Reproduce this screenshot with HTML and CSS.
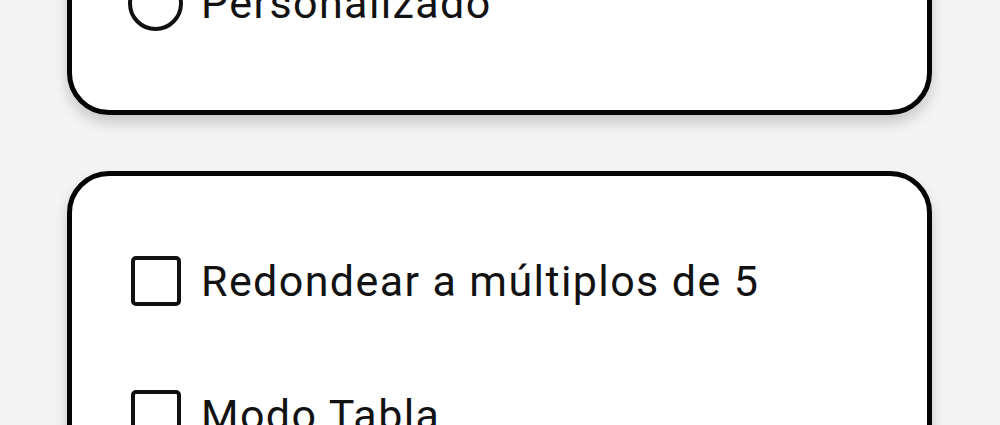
FILE: index.html
```html
<!DOCTYPE html>
<html lang="es">
<head>
<meta charset="utf-8">
<link rel="stylesheet" href="styles.css">
</head>
<body>
<div class="page">
  <div class="card card-top">
    <label class="row">
      <span class="radio"></span>
      <span class="label">Personalizado</span>
    </label>
  </div>
  <div class="card">
    <label class="row">
      <span class="checkbox"></span>
      <span class="label">Redondear a múltiplos de 5</span>
    </label>
    <label class="row">
      <span class="checkbox"></span>
      <span class="label">Modo Tabla</span>
    </label>
  </div>
</div>
</body>
</html>
```
FILE: styles.css
```css
html, body {
  margin: 0;
  padding: 0;
  background: #f4f4f4;
  overflow: hidden;
}
.page {
  width: 1000px;
  height: 425px;
  padding: 0 68px 0 67px;
  box-sizing: border-box;
  display: flex;
  flex-direction: column;
  gap: 56px;
  font-family: Roboto, "Noto Sans", sans-serif;
  color: #121212;
}
.card {
  background: #fff;
  border: 5px solid #050505;
  border-radius: 42px;
  padding: 38px 0 38px 59px;
  box-shadow: 0 8px 14px rgba(0, 0, 0, 0.18);
  flex-shrink: 0;
}
.card-top {
  margin-top: -107px;
  padding-bottom: 40px;
}
.row {
  display: flex;
  align-items: center;
  height: 134px;
}
.checkbox {
  width: 50px;
  height: 50px;
  box-sizing: border-box;
  border: 4.5px solid #111;
  border-radius: 5px;
  flex-shrink: 0;
}
.radio {
  width: 55px;
  height: 55px;
  box-sizing: border-box;
  border: 4.5px solid #111;
  border-radius: 50%;
  margin-left: -3px;
  margin-right: -2px;
  flex-shrink: 0;
}
.label {
  margin-left: 20px;
  font-size: 43px;
  letter-spacing: 1.4px;
  line-height: 1;
}
```
